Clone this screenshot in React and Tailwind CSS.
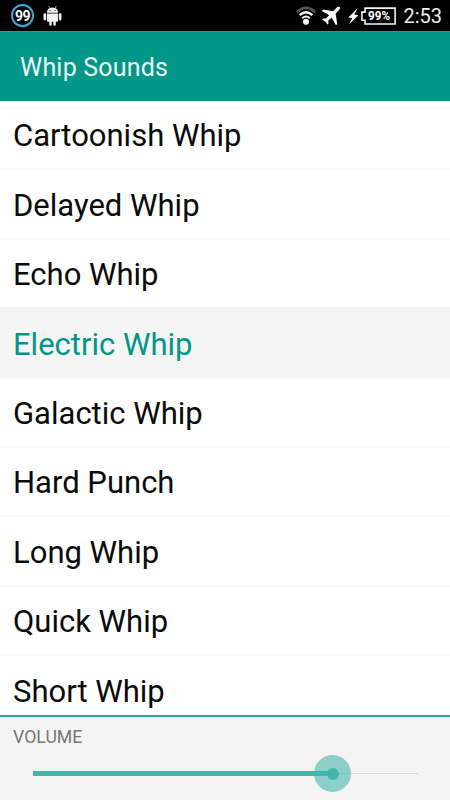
const sounds = [
  { name: "Cartoonish Whip" },
  { name: "Delayed Whip" },
  { name: "Echo Whip" },
  { name: "Electric Whip", active: true },
  { name: "Galactic Whip" },
  { name: "Hard Punch" },
  { name: "Long Whip" },
  { name: "Quick Whip" },
  { name: "Short Whip" },
];

function AndroidIcon() {
  return (
    <svg className="ml-[9px] h-[20px] w-[19px]" viewBox="0 0 19 20" fill="#f2f2f2">
      <path d="M4 6.700C4 4.600 5.100 3 6.600 2.100L5.400.400l.5-.300 1.300 1.800a6.600 6.600 0 0 1 4.600 0L13.100.100l.5.300-1.200 1.700C13.900 3 15 4.600 15 6.700Z" />
      <path d="M4 7.500h11v7.300a1 1 0 0 1-1 1h-1.200v2.600a1.200 1.200 0 0 1-2.500 0v-2.600H8.700v2.600a1.200 1.200 0 0 1-2.500 0v-2.600H5a1 1 0 0 1-1-1Z" />
      <rect x=".5" y="7.200" width="2.700" height="7.200" rx="1.300" />
      <rect x="15.800" y="7.200" width="2.700" height="7.200" rx="1.300" />
      <circle cx="7" cy="4.500" r=".6" fill="#000" />
      <circle cx="12" cy="4.500" r=".6" fill="#000" />
    </svg>
  );
}

function WifiIcon() {
  return (
    <svg className="h-[20px] w-[20px]" viewBox="0 0 20 20" fill="none">
      <path d="M.9 6.100Q10-2.300 19.100 6.100" stroke="#555" strokeWidth="2.500" />
      <path d="M3.600 9.200Q10 3.200 16.400 9.200" stroke="#f4f4f4" strokeWidth="2.300" />
      <path d="M6.200 12.200Q10 8.700 13.800 12.200" stroke="#f4f4f4" strokeWidth="2" />
      <circle cx="10" cy="15.800" r="3" fill="#fff" />
    </svg>
  );
}

function PlaneIcon() {
  return (
    <svg className="ml-[5px] h-[20px] w-[20px]" viewBox="0 0 20 20" fill="#fff">
      <path d="M18.600 1.100c.7.700.4 2-.6 3L14.600 7.500 16.300 18.200 14.800 19 10.600 11.500 7.200 14.800 7.500 17.600 6.300 18.600 4.400 15.400 1.100 13.600 2.200 12.400 4.900 12.600 8.200 9.200.900 5 2 3.600 12.200 5.200 15.600 1.700c1-1 2.300-1.300 3-.6Z" />
    </svg>
  );
}

function BatteryIcon() {
  return (
    <svg className="ml-[6px] h-[20px] w-[49px]" viewBox="0 0 49 20">
      <path d="M10.700 2.100 1.400 11.500 5.300 12.200 1.900 18.500 11.400 9.200 7.300 8.400Z" fill="#fff" />
      <path d="M18 2.100H48.100V18H18V14.200H14.900V6.100H18Z" fill="none" stroke="#f5f5f5" strokeWidth="1.600" />
      <text x="32" y="14.300" textAnchor="middle" fill="#fff" fontSize="12" fontWeight="700" fontFamily="Roboto, sans-serif" textLength="22" lengthAdjust="spacingAndGlyphs">99%</text>
    </svg>
  );
}

function StatusBar() {
  return (
    <div className="flex h-[31px] items-center bg-black pr-[8px] pl-[11px]">
      <div className="flex size-[23px] items-center justify-center rounded-full border-2 border-[#35acdf] pt-px text-[14px] font-bold tracking-[-0.5px] text-white">
        99
      </div>
      <AndroidIcon />
      <div className="ml-auto flex items-center">
        <WifiIcon />
        <PlaneIcon />
        <BatteryIcon />
        <span className="ml-[7px] text-[20px] leading-[20px] text-[#ededed]">2:53</span>
      </div>
    </div>
  );
}

export default function App() {
  return (
    <div className="flex h-[800px] w-[450px] flex-col overflow-hidden bg-white font-[Roboto,sans-serif]">
      <StatusBar />
      <header className="flex h-[70px] shrink-0 items-center border-t border-b border-t-[#229e92] border-b-[#008b7d] bg-[#009688] pt-[4px] pl-[20px]">
        <h1 className="text-[25px] tracking-[0.2px] text-[#edf8f7]">Whip Sounds</h1>
      </header>
      <ul className="-mt-px min-h-0 flex-1 overflow-hidden border-t border-[#008b7d]">
        {sounds.map((s) => (
          <li
            key={s.name}
            className={`flex items-center border-b-2 pl-[13px] text-[31px] ${
              s.active
                ? "-mt-[2px] h-[71.4px] border-[#fafafa] bg-[#f5f5f5] pt-[6px] text-[#009688]"
                : "h-[69.4px] border-[#f9f9f9] pt-[4px] text-[#0a0a0a]"
            }`}
          >
            {s.name}
          </li>
        ))}
      </ul>
      <footer className="h-[85px] shrink-0 border-t-2 border-[#26aa9d] bg-[#f4f4f4] pt-[9px] pl-[13px]">
        <div className="text-[17.7px] leading-[22px] text-[#757575]">VOLUME</div>
        <div className="relative mt-[23px] ml-[20px] flex h-[5px] w-[385px] items-center">
          <div className="h-[5px] w-[300px] bg-[#45b5aa]" />
          <div className="h-px flex-1 bg-[#d9d9d9]" />
          <div className="absolute top-[-16px] left-[281px] flex size-[37px] items-center justify-center rounded-full bg-[#45b5aa]/60">
            <div className="size-[12px] rounded-full bg-[#45b5aa]" />
          </div>
        </div>
      </footer>
    </div>
  );
}
